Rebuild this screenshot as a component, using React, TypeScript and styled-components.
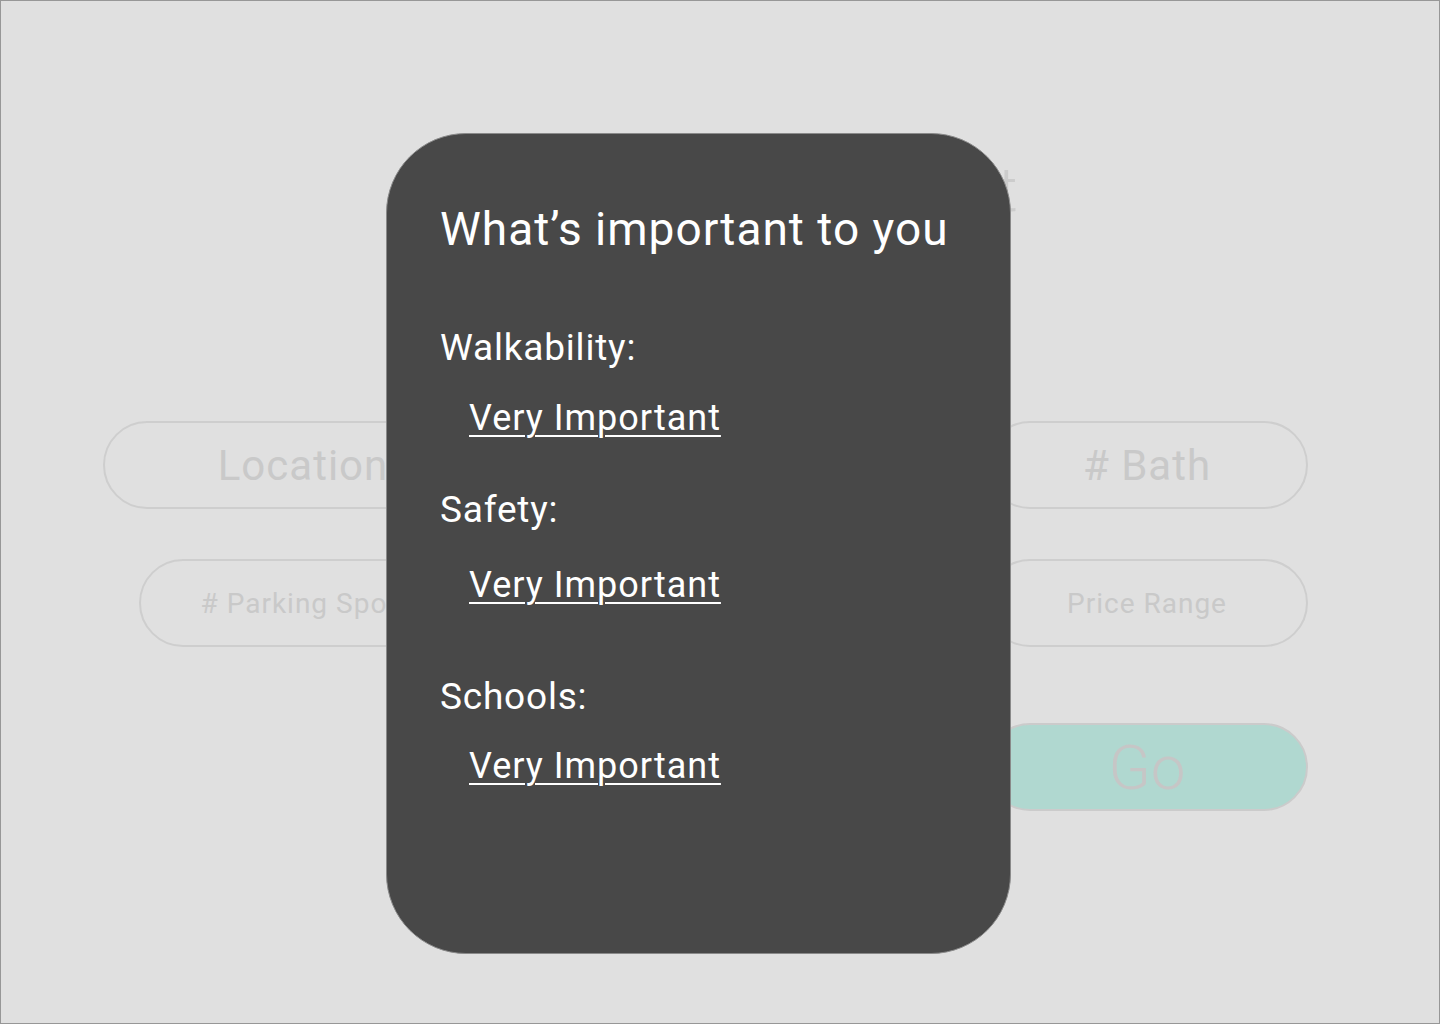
import React from "react";
import styled, { createGlobalStyle } from "styled-components";

const GlobalStyle = createGlobalStyle`
  html, body {
    margin: 0;
    padding: 0;
    background: #e0e0e0;
  }
  * {
    box-sizing: border-box;
  }
`;

const Page = styled.div`
  position: relative;
  width: 1440px;
  height: 1024px;
  border: 1px solid #979797;
  background: #e0e0e0;
  font-family: Roboto, "Liberation Sans", sans-serif;
  overflow: hidden;
`;

const Heading = styled.h1`
  margin: 0;
  padding: 152px 18px 0 0;
  text-align: center;
  font-size: 62px;
  font-weight: 300;
  color: #cccccc;
  letter-spacing: 1px;
`;

const Form = styled.div`
  display: flex;
  flex-direction: column;
  margin-top: 195px;
  padding: 0 131px 0 102px;
`;

const Row = styled.div<{ $indent?: number; $top?: number; $end?: boolean }>`
  display: flex;
  gap: 20px;
  margin-top: ${(p) => p.$top ?? 0}px;
  padding-left: ${(p) => p.$indent ?? 0}px;
  justify-content: ${(p) => (p.$end ? "flex-end" : "space-between")};
`;

const Field = styled.div<{ $w?: number; $size: number }>`
  display: flex;
  align-items: center;
  justify-content: center;
  height: 88px;
  width: ${(p) => (p.$w ? `${p.$w}px` : "auto")};
  flex: ${(p) => (p.$w ? "none" : "1")};
  border: 2px solid #cecece;
  border-radius: 44px;
  color: #c9c9c9;
  font-size: ${(p) => p.$size}px;
  letter-spacing: 1px;
  white-space: nowrap;
  overflow: hidden;
`;

const GoButton = styled.button`
  width: 322px;
  height: 88px;
  border: 2px solid #cbcbcb;
  border-radius: 44px;
  background: #b0d8d0;
  color: #c6c6c6;
  font-family: inherit;
  font-size: 62px;
  font-weight: 300;
  padding: 0;
`;

const Modal = styled.div`
  position: absolute;
  left: 385px;
  top: 132px;
  width: 625px;
  height: 821px;
  background: #484848;
  border: 1px solid #8a8a8a;
  border-radius: 80px;
  padding: 60px 0 0 53px;
  color: #ffffff;
`;

const ModalTitle = styled.h2`
  margin: 0;
  font-size: 46px;
  font-weight: 400;
  letter-spacing: 1px;
  line-height: 70px;
`;

const Group = styled.div<{ $top: number }>`
  margin-top: ${(p) => p.$top}px;
`;

const Label = styled.div`
  font-size: 37px;
  line-height: 44px;
  letter-spacing: 0.8px;
`;

const Choice = styled.a<{ $top: number }>`
  display: inline-block;
  margin: ${(p) => p.$top}px 0 0 29px;
  font-size: 36px;
  line-height: 44px;
  letter-spacing: 1px;
  color: #ffffff;
  text-decoration: underline;
  text-underline-offset: 5px;
  text-decoration-thickness: 2px;
`;

const priorities = [
  { label: "Walkability:", top: 62, gap: 26 },
  { label: "Safety:", top: 48, gap: 31 },
  { label: "Schools:", top: 68, gap: 25 },
];

export default function App() {
  return (
    <Page>
      <GlobalStyle />
      <Heading>Find your perfect spot</Heading>
      <Form>
        <Row>
          <Field $w={400} $size={42}>Location</Field>
          <Field $size={42}># Bed</Field>
          <Field $w={322} $size={42}># Bath</Field>
        </Row>
        <Row $indent={36} $top={50}>
          <Field $w={320} $size={28}># Parking Spot</Field>
          <Field $size={28}>Type</Field>
          <Field $w={322} $size={28}>Price Range</Field>
        </Row>
        <Row $top={76} $end>
          <GoButton>Go</GoButton>
        </Row>
      </Form>
      <Modal>
        <ModalTitle>What’s important to you</ModalTitle>
        {priorities.map((p) => (
          <Group key={p.label} $top={p.top}>
            <Label>{p.label}</Label>
            <Choice $top={p.gap}>Very Important</Choice>
          </Group>
        ))}
      </Modal>
    </Page>
  );
}
